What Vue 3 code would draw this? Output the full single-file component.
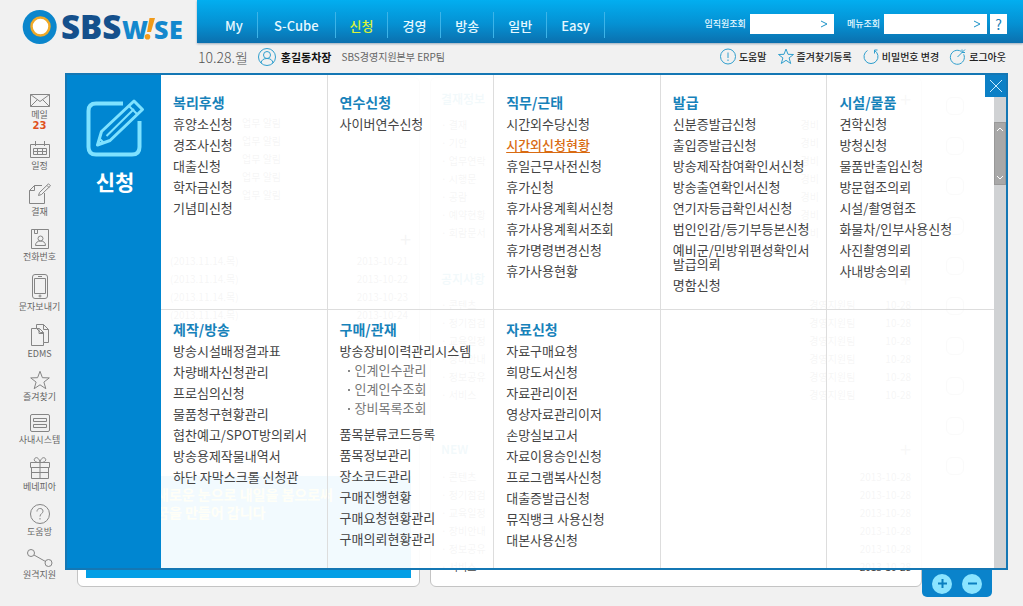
<script setup>
const nav = ['My', 'S-Cube', '신청', '경영', '방송', '일반', 'Easy']

const side = [
  { id: 'mail', label: '메일', count: 23, w: 20, h: 13, d: 'M.5.5h19v12H.5zM.5.5l9.5 7 9.5-7M.5 12.5l7-7M19.5 12.5l-7-7' },
  { id: 'cal', label: '일정', w: 20, h: 17, d: 'M.5 3.5h19v13H.5zM5.5 0v5M14.5 0v5M3.5 7.5h13v6h-13zM3.5 10.5h13M7.5 7.5v6M12.5 7.5v6' },
  { id: 'sign', label: '결재', w: 22, h: 21, d: 'M13 2.500H5.500L.5 7.500v13h15V10M.5 7.500h5v-5M9.500 12.500l1-3L19.500.8l2 2-9 8.700zM18 2.500l2 2' },
  { id: 'phonebook', label: '전화번호', w: 18, h: 20, d: 'M.5.5h17v19H.5zM3.500.5v4h3v-4M4.500 16.500c0-3 2-4.500 5-4.500s5 1.500 5 4.500zM9.500 7a2.500 2.500 0 1 1 0 5 2.500 2.500 0 0 1 0-5' },
  { id: 'sms', label: '문자보내기', w: 16, h: 25, d: 'M3 .5h10q2.500 0 2.500 2.500v19q0 2.500-2.500 2.500H3Q.5 24.500.5 22V3Q.5.5 3 .5zM2.500 4.500h11v15h-11zM6 2.500h4M8 21a1 1 0 1 1 0 2 1 1 0 0 1 0-2' },
  { id: 'edms', label: 'EDMS', w: 18, h: 22, d: 'M5.500 4.500h-5v17h12v-3M5.500 4.500l4 4v0h3M8 4.500v5h4M5.500.5h7l5 5v13h-5v-10l-4-4h-3zM12.500.5v5h5' },
  { id: 'fav', label: '즐겨찾기', w: 20, h: 18, d: 'M10 .3l2.400 6.400 6.900.2-5.400 4.200 1.900 6.600L10 13.800l-5.800 3.900 1.900-6.600L.7 6.900l6.900-.2z' },
  { id: 'sys', label: '사내시스템', w: 20, h: 18, d: 'M2 .5h16q1.500 0 1.500 1.500v14q0 1.500-1.500 1.500H2Q.5 17.500.5 16V2Q.5.5 2 .5zM3.500 4.500h13v3h-13zM3.500 10.500h13v3h-13z' },
  { id: 'gift', label: '베네피아', w: 20, h: 22, d: 'M.5 5.500h19v5H.5zM1.500 10.500h17v11h-17zM1.500 15.500h17M10 5.500v16M10 5.500C5 6 3 3 5 1.200S9.500 2 10 5.500C10.500 2 13 -.5 15 1.200S15 6 10 5.500' },
  { id: 'help', label: '도움방', w: 20, h: 20, d: 'M10 .5a9.500 9.500 0 1 1 0 19 9.500 9.500 0 0 1 0-19M7 7.500C7 3.500 13 3.500 13 7.200c0 2.500-3 2.300-3 5.300M10 14v1.500' },
  { id: 'remote', label: '원격지원', w: 26, h: 18, d: 'M4 .5a3.500 3.500 0 1 1 0 7 3.500 3.500 0 0 1 0-7M21.500 10.500a3.500 3.500 0 1 1 0 7 3.500 3.500 0 0 1 0-7M7 6l11.500 6.500' }
]

const util = [
  { label: '도움말', d: 'M8 1a7.500 7.500 0 1 1 0 15A7.500 7.500 0 0 1 8 1M8 4.500v5.500M8 11.500V13' },
  { label: '즐겨찾기등록', d: 'M8 1l2 5.300 5.500.2-4.400 3.400 1.600 5.600L8 12.300l-4.700 3.200 1.600-5.600L.5 6.500 6 6.300z' },
  { label: '비밀번호 변경', d: 'M4.500 2.500a7 7 0 1 0 7 0M11.500 5.500v-3.500h3' },
  { label: '로그아웃', d: 'M11 3.300a7 7 0 1 0 2.700 3M7.500 9L15 1.500M12 1.500v3h3' }
]

const groups = [
  { title: '복리후생', items: ['휴양소신청', '경조사신청', '대출신청', '학자금신청', '기념미신청'] },
  { title: '연수신청', items: ['사이버연수신청'] },
  { title: '직무/근태', items: ['시간외수당신청', '시간외신청현황', '휴일근무사전신청', '휴가신청', '휴가사용계획서신청', '휴가사용계획서조회', '휴가명령변경신청', '휴가사용현황'] },
  { title: '발급', items: ['신분증발급신청', '출입증발급신청', '방송제작참여확인서신청', '방송출연확인서신청', '연기자등급확인서신청', '법인인감/등기부등본신청', '예비군/민방위편성확인서\n발급의뢰', '명함신청'] },
  { title: '시설/물품', items: ['견학신청', '방청신청', '물품반출입신청', '방문협조의뢰', '시설/촬영협조', '화물차/인부사용신청', '사진촬영의뢰', '사내방송의뢰'] },
  { title: '제작/방송', items: ['방송시설배정결과표', '차량배차신청관리', '프로심의신청', '물품청구현황관리', '협찬예고/SPOT방의뢰서', '방송용제작물내역서', '하단 자막스크롤 신청관'] },
  { title: '구매/관재', items: ['방송장비이력관리시스템', '품목분류코드등록', '품목정보관리', '장소코드관리', '구매진행현황', '구매요청현황관리', '구매의뢰현황관리'] },
  { title: '자료신청', items: ['자료구매요청', '희망도서신청', '자료관리이전', '영상자료관리이저', '손망실보고서', '자료이용승인신청', '프로그램복사신청', '대출증발급신청', '뮤직뱅크 사용신청', '대본사용신청'] },
  { title: '', items: [] },
  { title: '', items: [] }
]
const children = { '방송장비이력관리시스템': ['인계인수관리', '인계인수조회', '장비목록조회'] }
const current = '시간외신청현황'

const notices = ['결재', '기안', '업무연락', '시행문', '공람', '예약현황', '회람문서']
const news = ['콘텐츠', '정기점검', '교육일정', '장비안내', '정보공유', '서비스']
const quick = [0, 1, 2, 3, 4, 5, 6, 7, 8, 9]
</script>

<template>
  <div class="page">
    <header class="top">
      <a class="logo" href="#" aria-label="SBS WISE">
        <svg width="197" height="50" viewBox="0 0 197 50">
          <circle cx="39.700" cy="27" r="17" fill="#0b86cc" />
          <circle cx="40.500" cy="26.500" r="9" fill="#fff" stroke="#efa928" stroke-width="2.500" />
          <text class="sbs" x="61" y="39">SBS</text>
          <text class="wise" x="122" y="39">W</text>
          <path d="M149.500 18h5.500l-4 14h-4z" fill="#f09a1a" />
          <circle cx="147.500" cy="36.800" r="2.800" fill="#f09a1a" />
          <text class="wise" x="154" y="39">S</text>
          <text class="wise" x="169" y="39">E</text>
        </svg>
      </a>
      <div class="bar">
        <nav class="nav">
          <a v-for="n in nav" :key="n" href="#" :class="{ on: n === '신청' }">{{ n }}</a>
        </nav>
        <form class="search" @submit.prevent>
          <label for="staff">임직원조회</label>
          <span class="box staff"><input id="staff" type="text"><button aria-label="임직원조회 검색"><svg width="8" height="8" viewBox="0 0 8 8"><path d="M1 1l6 3-6 3" /></svg></button></span>
          <label for="menu">메뉴조회</label>
          <span class="box menu"><input id="menu" type="text"><button aria-label="메뉴조회 검색"><svg width="8" height="8" viewBox="0 0 8 8"><path d="M1 1l6 3-6 3" /></svg></button></span>
          <button type="button" class="q">?</button>
        </form>
      </div>
    </header>

    <div class="strip">
      <span class="date">10.28.월</span>
      <svg class="line-icon" width="18" height="18" viewBox="0 0 18 18"><circle cx="9" cy="9" r="8.500" /><circle cx="9" cy="7" r="3.500" /><path d="M3 15c.5-3 2.500-4.500 6-4.500s5.500 1.500 6 4.500" /></svg>
      <strong>홍길동차장</strong>
      <span class="dept">SBS경영지원본부 ERP팀</span>
      <div class="util">
        <a v-for="u in util" :key="u.label" href="#">
          <svg class="line-icon" width="16" height="17" viewBox="0 0 16 17"><path :d="u.d" /></svg>{{ u.label }}
        </a>
      </div>
    </div>

    <div class="body">
      <aside class="side">
        <a v-for="s in side" :key="s.id" href="#">
          <svg :width="s.w" :height="s.h" :viewBox="`0 0 ${s.w} ${s.h}`"><path :d="s.d" /></svg>
          <span>{{ s.label }}</span>
          <b v-if="s.count">{{ s.count }}</b>
        </a>
      </aside>

      <main class="stage">
        <div class="board" aria-hidden="true">
          <section class="card small">
            <ul class="rows alerts">
              <li v-for="n in 5" :key="n"><span>업무 알림</span></li>
            </ul>
            <div class="plus">+</div>
            <ul class="rows dates">
              <li v-for="n in 4" :key="n"><span>(2013.11.14.목)</span><span>2013-10-2{{ n }}</span></li>
            </ul>
            <div class="banner">새로운 눈으로 내일을 봄으로써<br>꿈을 만들어 갑니다</div>
          </section>
          <section class="card wide">
            <div class="heading"><b>결재정보</b><span>+</span></div>
            <ul class="rows first"><li v-for="n in notices" :key="n"><span>· {{ n }}</span><span>경비</span></li></ul>
            <div class="heading"><b>공지사항</b><span>+</span></div>
            <ul class="rows second"><li v-for="n in news" :key="n"><span>· {{ n }}</span><span class="mid">경영지원팀</span><span>10-28</span></li></ul>
            <div class="heading"><b>NEW</b><span>+</span></div>
            <ul class="rows third"><li v-for="n in news" :key="n"><span>· {{ n }}</span><span>2013-10-28</span></li></ul>
          </section>
          <div class="quick"><i v-for="n in quick" :key="n" /></div>
        </div>

        <section class="panel">
          <div class="lead">
            <svg width="60" height="60" viewBox="0 0 60 60">
              <path d="M38 4.500H11Q3.500 4.500 3.500 12v36q0 7.500 7.500 7.500h36q7.500 0 7.500-7.500V22" fill="none" stroke="#7fe2ff" stroke-width="4" />
              <path d="M12.500 46l4-13.500L49 2l8.500 8.500L25 41.500z" fill="#0086d1" stroke="#7fe2ff" stroke-width="3" stroke-linejoin="round" />
              <path d="M21.500 37L49 10M44 7l8.500 8.500M13 45l5-2-3-3z" fill="none" stroke="#7fe2ff" stroke-width="2" />
            </svg>
            <h1>신청</h1>
          </div>
          <div class="grid">
            <div v-for="(g, i) in groups" :key="i" class="cell">
              <h2 v-if="g.title">{{ g.title }}</h2>
              <ul v-if="g.items.length">
                <li v-for="t in g.items" :key="t">
                  <a href="#" :class="{ current: t === current }">{{ t }}</a>
                  <ul v-if="children[t]" class="sub">
                    <li v-for="c in children[t]" :key="c"><a href="#">{{ c }}</a></li>
                  </ul>
                </li>
              </ul>
            </div>
          </div>
          <div class="track">
            <div class="thumb">
              <svg width="6" height="4" viewBox="0 0 6 4"><path d="M0 4l3-3 3 3" /></svg>
              <svg width="6" height="4" viewBox="0 0 6 4"><path d="M0 0l3 3 3-3" /></svg>
            </div>
          </div>
          <button class="close" aria-label="닫기"><svg width="12" height="12" viewBox="0 0 12 12"><path d="M0 0l12 12M12 0L0 12" /></svg></button>
        </section>

        <div class="zoomer">
          <button aria-label="확대"><svg width="9" height="9" viewBox="0 0 9 9"><path d="M0 4.500h9M4.500 0v9" /></svg></button>
          <button aria-label="축소"><svg width="9" height="9" viewBox="0 0 9 9"><path d="M0 4.500h9" /></svg></button>
        </div>
      </main>
    </div>
  </div>
</template>

<style>
body {
  background: #f1f1f1;
}
</style>

<style scoped>
.page {
  font-family: "Noto Sans CJK KR", sans-serif;
  color: #444;
  min-height: 100vh;
  background: #f1f1f1;
  box-sizing: border-box;
}
.page * {
  box-sizing: border-box;
}
a {
  color: inherit;
  text-decoration: none;
}
ul {
  list-style: none;
  margin: 0;
  padding: 0;
}
button {
  border: 0;
  padding: 0;
  font-family: inherit;
  cursor: pointer;
}
h1,
h2 {
  margin: 0;
}
svg {
  display: block;
  flex: none;
  overflow: visible;
}

.top {
  display: flex;
  height: 43px;
}
.logo {
  width: 197px;
  flex: none;
}
.sbs {
  font: 800 33px "Open Sans", sans-serif;
  fill: #15508c;
}
.wise {
  font: 800 25px "Open Sans", sans-serif;
  fill: #1488cd;
}
.bar {
  flex: 1;
  display: flex;
  justify-content: space-between;
  padding: 0 16px 0 9px;
  background: linear-gradient(#02aef0, #0591d3 55%, #0b70ae);
  box-shadow: 0 1px 2px #9ab;
}
.nav {
  display: flex;
  padding: 12px 0 0 5px;
}
.nav a {
  height: 26px;
  padding: 0 14px;
  border-right: 1px solid #3db4e8;
  color: #e6f8ff;
  font-size: 13px;
  font-weight: 500;
  line-height: 28px;
}
.nav a:nth-child(2) {
  padding: 0 16px;
}
.nav .on {
  color: #d8f23c;
}
.search {
  display: flex;
  align-items: center;
  padding-bottom: 1px;
  height: 48px;
}
.search label {
  color: #e6f8ff;
  font-size: 9px;
  font-weight: 500;
  margin-right: 4px;
}
.box {
  display: flex;
  align-items: center;
  height: 20px;
  background: #fff;
  padding-right: 6px;
}
.staff {
  width: 84px;
  margin-right: 13px;
}
.menu {
  width: 103px;
  margin-right: 3px;
}
.box input {
  flex: 1;
  min-width: 0;
  height: 18px;
  border: 0;
  outline: 0;
  background: none;
}
.box button {
  background: none;
}
.box path {
  fill: none;
  stroke: #1d93c8;
}
.q {
  width: 17px;
  height: 20px;
  background: #fff;
  color: #1580b8;
  font-size: 14px;
  line-height: 20px;
}

.strip {
  display: flex;
  align-items: center;
  height: 30px;
  padding: 0 17px 3px 198px;
}
.date {
  font-size: 14px;
  font-weight: 300;
  color: #555;
  margin-right: 10px;
}
.line-icon {
  fill: none;
  stroke: #2f9fce;
}
.strip strong {
  margin: 0 10px 0 5px;
  font-size: 11px;
  color: #111;
}
.dept {
  font-size: 10px;
  color: #666;
}
.util {
  display: flex;
  gap: 11px;
  margin-left: auto;
  font-size: 10px;
  font-weight: 500;
  color: #222;
}
.util a {
  display: flex;
  align-items: center;
  gap: 3px;
}

.body {
  display: flex;
  align-items: flex-start;
}
.side {
  width: 65px;
  flex: none;
  display: flex;
  flex-direction: column;
  gap: 11px;
  padding: 21px 0 0 14px;
}
.side a {
  display: flex;
  flex-direction: column;
  align-items: center;
  font-size: 9px;
  line-height: 12px;
  color: #666;
  white-space: nowrap;
}
.side path {
  fill: none;
  stroke: #858585;
}
.side span {
  margin-top: 2px;
}
.side b {
  margin: -1px 0 -2px;
  font: bold 10px/12px "DejaVu Sans", sans-serif;
  color: #e0501c;
}

.stage {
  flex: 1;
  min-width: 0;
  display: grid;
  grid-template: auto 17px 10px / minmax(0, 1fr);
  padding-right: 15px;
}
.board {
  grid-area: 1 / 1 / 3 / 2;
  display: flex;
  gap: 10px;
  min-height: 0;
  padding: 4px 0 0 12px;
  font-size: 10px;
  line-height: 18px;
  color: #444;
}
.card {
  border: 1px solid #c4c4c4;
  border-radius: 6px;
  background: #fff;
  overflow: hidden;
}
.small {
  width: 343px;
  flex: none;
  display: flex;
  flex-direction: column;
  padding: 36px 8px 8px 8px;
}
.rows li {
  display: flex;
  justify-content: space-between;
}
.alerts {
  padding-left: 156px;
}
.dates {
  padding: 0 3px 0 84px;
}
.plus {
  padding: 26px 0 4px;
  text-align: right;
  font-size: 20px;
}
.banner {
  margin-top: auto;
  height: 102px;
  padding: 9px 0 0 70px;
  background: #049fe6;
  color: #ffef6a;
  font-size: 14px;
  font-weight: bold;
}
.wide {
  flex: 1;
  padding: 12px 10px 0;
  height: 510px;
}
.heading {
  display: flex;
  justify-content: space-between;
  height: 26px;
  font-size: 12px;
  color: #18a;
}
.heading span {
  font-size: 20px;
  color: #777;
}
.first {
  height: 154px;
  padding-right: 92px;
}
.second {
  height: 144px;
}
.mid {
  margin-left: auto;
  margin-right: 30px;
}
.rows.third {
  padding-top: 2px;
}
.quick {
  width: 76px;
  padding: 20px 0 0 14px;
  display: flex;
  flex-direction: column;
  gap: 22px;
}
.quick i {
  width: 18px;
  height: 18px;
  border: 1px solid #999;
  border-radius: 6px;
}

.panel {
  grid-area: 1 / 1;
  position: relative;
  display: flex;
  border: 2px solid #1477b4;
  background: rgba(255, 255, 255, 0.95);
}
.lead {
  width: 94px;
  flex: none;
  display: flex;
  flex-direction: column;
  align-items: center;
  padding: 24px 0 0 2px;
  background: #0086d1;
}
.lead h1 {
  margin-top: 6px;
  font-size: 21px;
  line-height: 32px;
  color: #fff;
}
.grid {
  flex: 1;
  min-width: 0;
  display: grid;
  grid-template-columns: repeat(5, minmax(0, 1fr));
}
.cell {
  padding: 9px 0 21px 12px;
  border-right: 1px solid #ddd;
}
.cell:nth-child(-n + 5) {
  padding: 17px 0 17px 12px;
  border-bottom: 1px solid #ddd;
}
.cell:nth-child(5n) {
  border-right: 0;
}
h2 {
  margin-bottom: 5px;
  font-size: 14px;
  font-weight: 700;
  line-height: 20px;
  color: #1782ba;
}
.cell ul {
  display: flex;
  flex-direction: column;
  gap: 7px;
}
.cell li {
  font-size: 13px;
  line-height: 14px;
  white-space: pre;
}
.cell a {
  display: inline-block;
  vertical-align: top;
}
.cell .current {
  color: #d96b12;
  font-weight: 500;
  text-decoration: underline;
  text-underline-offset: 2px;
}
.cell .sub {
  gap: 5px;
  padding: 5px 0 5px 6px;
  color: #777;
}
.sub li {
  display: flex;
}
.sub li::before {
  content: "";
  width: 2px;
  height: 2px;
  margin: 7px 5px 0 2px;
  background: #888;
}
.track {
  width: 12px;
  flex: none;
  padding-top: 47px;
  background: #d0d2d4;
}
.thumb {
  height: 63px;
  display: flex;
  flex-direction: column;
  align-items: center;
  justify-content: space-between;
  padding: 4px 0;
  background: #a8a8a8;
  border: 1px solid #999;
}
.thumb path {
  fill: none;
  stroke: #fff;
}
.close {
  position: absolute;
  top: 0;
  right: 0;
  width: 21px;
  height: 22px;
  display: flex;
  align-items: center;
  justify-content: center;
  background: #0c80c6;
}
.close path {
  stroke: #c8ecff;
}
.zoomer {
  grid-area: 2 / 1 / 4 / 2;
  justify-self: end;
  display: flex;
  align-items: center;
  justify-content: center;
  gap: 10px;
  width: 70px;
  margin-right: 16px;
  border-radius: 0 0 5px 5px;
  background: #0a83cb;
  z-index: 1;
}
.zoomer button {
  width: 20px;
  height: 20px;
  display: flex;
  align-items: center;
  justify-content: center;
  border-radius: 50%;
  background: #8ae4ff;
}
.zoomer path {
  stroke: #0a7fc0;
  stroke-width: 2;
}
</style>
